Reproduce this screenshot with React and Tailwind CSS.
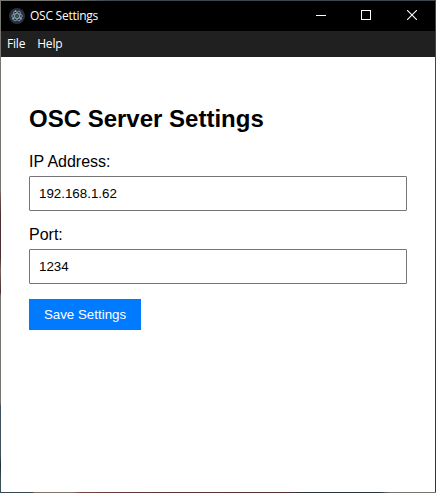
function ElectronIcon() {
  return (
    <svg className="block h-4 w-4 shrink-0" viewBox="0 0 16 16" fill="none">
      <circle cx="8" cy="8" r="8" fill="#2b2e3b" />
      <g stroke="#8fb3bd" strokeWidth="0.75">
        <ellipse cx="8" cy="8" rx="5.4" ry="2.3" />
        <ellipse cx="8" cy="8" rx="5.4" ry="2.3" transform="rotate(60 8 8)" />
        <ellipse cx="8" cy="8" rx="5.4" ry="2.3" transform="rotate(120 8 8)" />
      </g>
      <circle cx="8" cy="8" r="0.6" fill="#9fc5cf" />
      <circle cx="3.8" cy="10.8" r="0.7" fill="#9fc5cf" />
      <circle cx="12.2" cy="10.8" r="0.7" fill="#9fc5cf" />
      <circle cx="6.6" cy="3" r="0.7" fill="#9fc5cf" />
    </svg>
  );
}

function TitleBar() {
  return (
    <header className="flex h-[30px] shrink-0 items-center bg-black pl-2 text-white">
      <ElectronIcon />
      <span className="ml-[5px] w-[90px] whitespace-nowrap font-['Open_Sans','Noto_Sans',sans-serif] text-[12px] leading-4 tracking-[-0.25px]">
        OSC Settings
      </span>
      <div className="ml-auto flex h-full">
        <button aria-label="Minimize" className="flex w-11 items-center justify-center">
          <svg className="h-[10px] w-[10px]" viewBox="0 0 10 10" shapeRendering="crispEdges">
            <rect y="4" width="10" height="1" fill="#fff" />
          </svg>
        </button>
        <button aria-label="Maximize" className="flex w-[46px] items-center justify-center">
          <svg className="mb-[2px] h-[10px] w-[10px]" viewBox="0 0 10 10" shapeRendering="crispEdges">
            <rect x="0.5" y="0.5" width="9" height="9" fill="none" stroke="#fff" />
          </svg>
        </button>
        <button aria-label="Close" className="flex w-[46px] items-center justify-center">
          <svg className="mb-[2px] h-[10px] w-[10px]" viewBox="0 0 10 10">
            <path d="M0 0L10 10M10 0L0 10" stroke="#fff" strokeWidth="1.1" />
          </svg>
        </button>
      </div>
    </header>
  );
}

function MenuBar() {
  return (
    <nav className="flex h-[26px] shrink-0 items-center gap-3 bg-[#202020] pl-[6px] font-['Open_Sans','Noto_Sans',sans-serif] text-[12px] leading-4 tracking-[-0.2px] text-white">
      <span>File</span>
      <span>Help</span>
    </nav>
  );
}

function Field({ label, value }) {
  return (
    <label className="mb-[15px] block">
      <span className="mb-[5px] block text-[16px] leading-[18px]">{label}</span>
      <input
        type="text"
        defaultValue={value}
        className="block h-[35px] w-full rounded-[1px] border border-[#767676] bg-white px-[9px] text-[13.333px] outline-none"
      />
    </label>
  );
}

export default function App() {
  return (
    <div className="h-[493px] w-[436px] bg-[linear-gradient(to_bottom,#77756f_0px,#77756f_190px,#7b5550_195px,#4d3034_215px,#4d3034_258px,#79655f_270px,#4b3034_292px,#77756f_296px,#77756f_403px,#40535d_406px,#40535d_455px,#202d37_465px,#3c5059_480px),linear-gradient(to_right,#77756f_0px,#77756f_50px,#3b474e_110px,#3b474e_436px),linear-gradient(to_right,#34464e_0px,#34464e_32px,#80746b_35px,#80746b_73px,#73453d_80px,#5b3435_150px,#50302e_290px,#293338_305px,#293338_380px,#77756f_390px),linear-gradient(to_bottom,#40484d,#2c3539)] bg-[size:1px_493px,436px_1px,436px_1px,1px_493px] bg-[position:left_top,left_top,left_bottom,right_top] bg-no-repeat p-px">
      <div className="flex h-full flex-col overflow-hidden bg-white">
        <TitleBar />
        <MenuBar />
        <main className="flex-1 bg-white px-7 pt-12 font-['Liberation_Sans',Arial,sans-serif] text-black">
          <h1 className="mb-5 text-[24px] font-bold leading-[28px]">OSC Server Settings</h1>
          <Field label="IP Address:" value="192.168.1.62" />
          <Field label="Port:" value="1234" />
          <button className="block h-[31px] w-28 bg-[#007bff] text-center text-[13.333px] leading-[15px] text-white">
            Save Settings
          </button>
        </main>
      </div>
    </div>
  );
}
